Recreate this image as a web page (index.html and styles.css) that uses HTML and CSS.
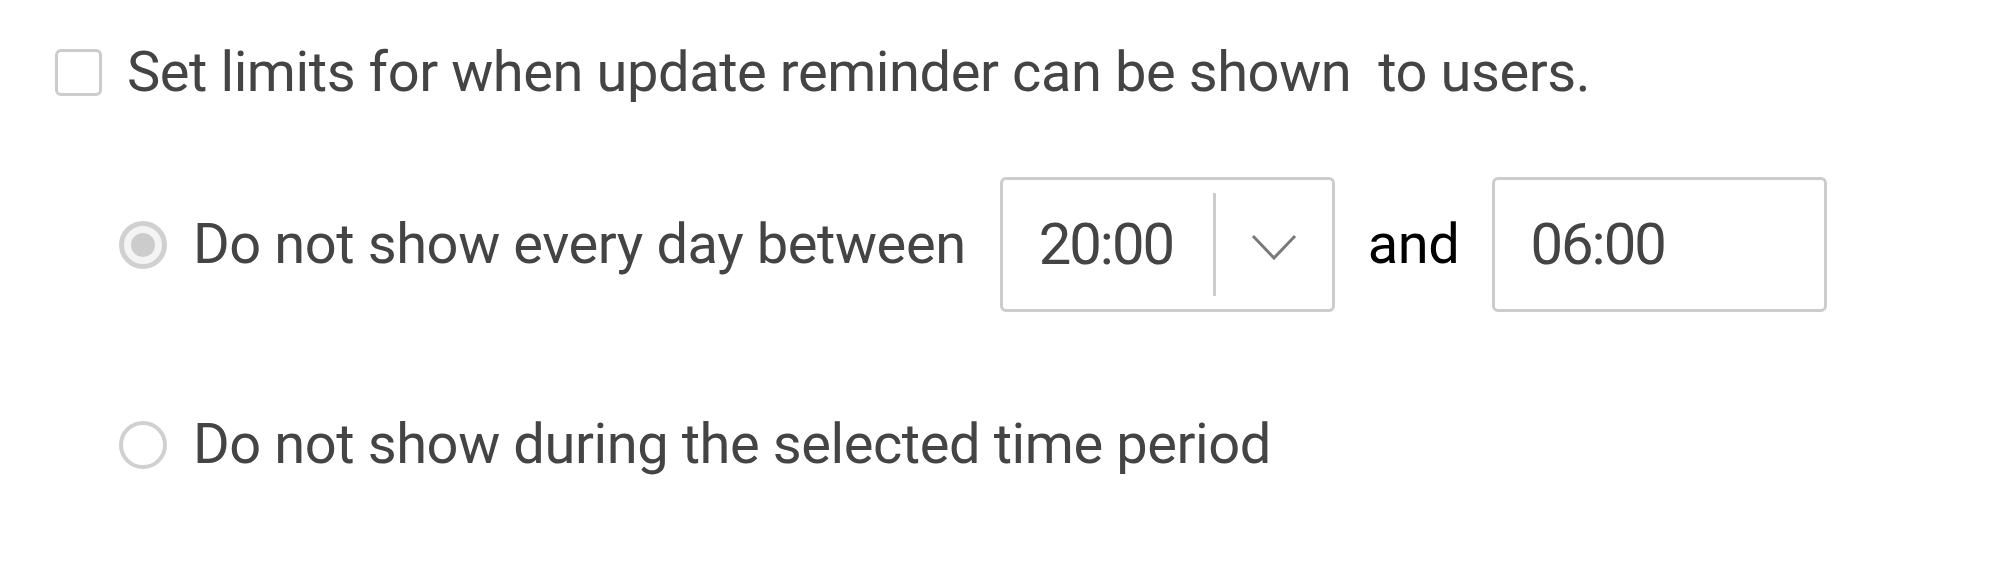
FILE: index.html
```html
<!DOCTYPE html>
<html lang="en">
<head>
<meta charset="utf-8">
<title>Update reminder limits</title>
<link rel="stylesheet" href="styles.css">
</head>
<body>
<div class="page">
  <div class="row row-main">
    <span class="checkbox"></span>
    <span class="label">Set limits for when update reminder can be shown&nbsp; to users.</span>
  </div>
  <div class="options">
    <div class="row row-between">
      <svg class="radio" width="48" height="48" viewBox="0 0 48 48">
        <circle cx="24" cy="24" r="21.5" fill="#f4f4f4" stroke="#d0d0d0" stroke-width="5"/>
        <circle cx="24" cy="24" r="12" fill="#cccccc"/>
      </svg>
      <span class="label">Do not show every day between</span>
      <div class="timebox select">
        <span class="time">20:00</span>
        <span class="divider"></span>
        <span class="arrow">
          <svg width="46" height="26" viewBox="0 0 46 26"><polyline points="2,2 23,24 44,2" fill="none" stroke="#7a7a7a" stroke-width="3"/></svg>
        </span>
      </div>
      <span class="and">and</span>
      <div class="timebox">
        <span class="time time2">06:00</span>
      </div>
    </div>
    <div class="row row-period">
      <svg class="radio" width="48" height="48" viewBox="0 0 48 48">
        <circle cx="24" cy="24" r="22" fill="#ffffff" stroke="#d0d0d0" stroke-width="4"/>
      </svg>
      <span class="label">Do not show during the selected time period</span>
    </div>
  </div>
</div>
</body>
</html>
```

FILE: styles.css
```css
html, body {
  margin: 0;
  padding: 0;
  background: #ffffff;
}

.page {
  display: flex;
  flex-direction: column;
  min-height: 100vh;
  box-sizing: border-box;
  padding: 49px 0 80px 55px;
  font-family: Roboto, "Liberation Sans", sans-serif;
  color: #444444;
}

.row {
  display: flex;
  align-items: center;
}

.row-main {
  height: 47px;
  gap: 25px;
}

.checkbox {
  box-sizing: border-box;
  width: 47px;
  height: 47px;
  border: 3px solid #cccccc;
  border-radius: 6px;
  flex: none;
}

.label {
  font-size: 56px;
  line-height: 1.2;
  letter-spacing: -0.42px;
  white-space: nowrap;
}

.options {
  display: flex;
  flex-direction: column;
  margin: 81px 0 0 64px;
}

.radio {
  flex: none;
  display: block;
}

.row-between {
  height: 135px;
}

.row-between .label {
  margin-left: 26px;
  margin-right: 34px;
}

.timebox {
  box-sizing: border-box;
  width: 335px;
  height: 135px;
  border: 3px solid #cccccc;
  border-radius: 6px;
  display: flex;
  align-items: center;
  flex: none;
}

.time {
  flex: none;
  font-size: 58px;
  line-height: 1.2;
  letter-spacing: -2px;
  color: #444444;
  padding-left: 36px;
  width: 210px;
  box-sizing: border-box;
  white-space: nowrap;
}

.time2 {
  padding-left: 35px;
}

.divider {
  flex: none;
  align-self: stretch;
  width: 3px;
  margin: 13px 0;
  background: #cccccc;
}

.arrow {
  flex: 1;
  display: flex;
  justify-content: center;
  align-items: center;
  padding-top: 4px;
}

.arrow svg {
  display: block;
}

.and {
  font-size: 56px;
  line-height: 1.2;
  letter-spacing: -0.42px;
  color: #000000;
  margin: 0 33px 0 33px;
}

.row-period {
  height: 48px;
  margin-top: 109px;
}

.row-period .label {
  margin-left: 26px;
}
```
